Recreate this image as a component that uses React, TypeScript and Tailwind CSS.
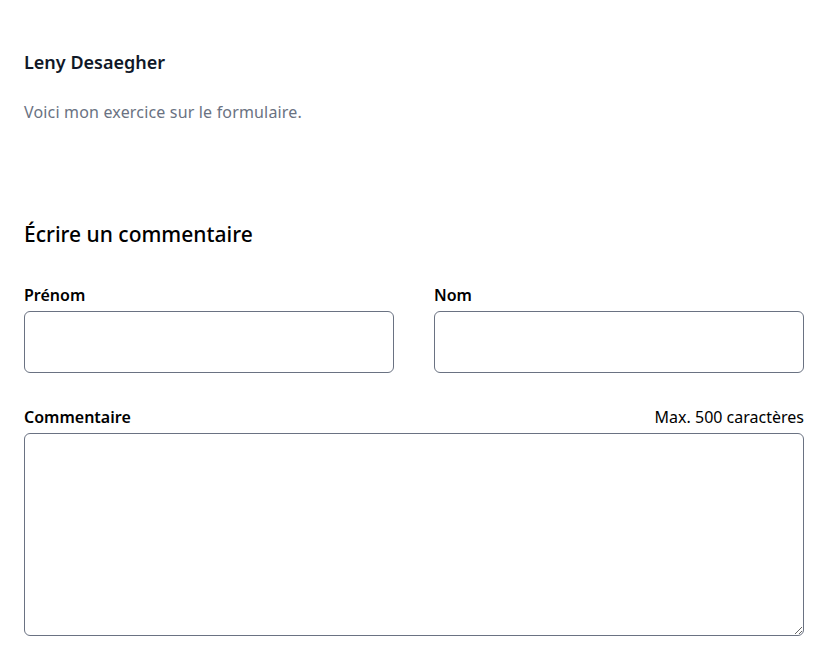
export default function App() {
  return (
    <div className="bg-white min-h-screen pl-6 pr-3 pt-12 text-gray-900" style={{ fontFamily: '"Noto Sans", "Open Sans", sans-serif' }}>
      {/* Author */}
      <div>
        <h2 className="text-lg leading-7 font-semibold text-gray-900">Leny Desaegher</h2>
        <p className="mt-6 text-base leading-6 tracking-[0.17px] text-gray-500">Voici mon exercice sur le formulaire.</p>
      </div>

      {/* Comment form */}
      <form className="mt-24">
        <h3 className="text-[21px] leading-7 font-medium text-black">Écrire un commentaire</h3>

        <div className="mt-[35px] grid grid-cols-2 gap-x-10">
          <div>
            <label className="block text-base leading-6 font-semibold text-black">Prénom</label>
            <input type="text" className="mt-1 block w-full h-[62px] rounded-md border border-gray-500 bg-white px-3" />
          </div>
          <div>
            <label className="block text-base leading-6 font-semibold text-black">Nom</label>
            <input type="text" className="mt-1 block w-full h-[62px] rounded-md border border-gray-500 bg-white px-3" />
          </div>
        </div>

        <div className="mt-8">
          <div className="flex items-center justify-between">
            <label className="block text-base leading-6 font-semibold text-black">Commentaire</label>
            <span className="text-base leading-6 text-black">Max. 500 caractères</span>
          </div>
          <textarea className="mt-1 block w-full h-[203px] rounded-md border border-gray-500 bg-white px-3 py-2" />
        </div>
      </form>
    </div>
  );
}
